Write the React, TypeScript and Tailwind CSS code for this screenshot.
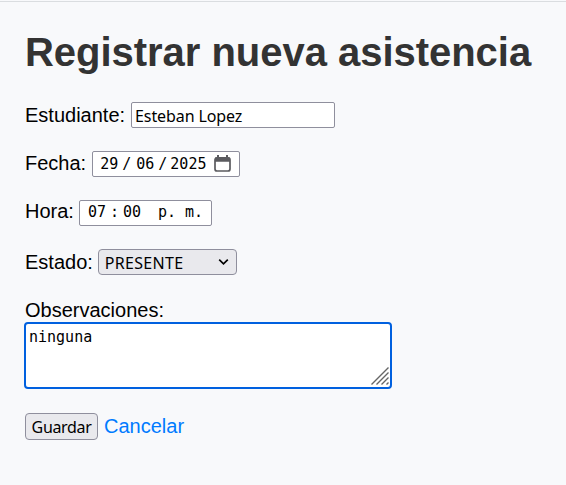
import React from "react";

const field =
  "box-border flex h-[26px] items-center rounded-[2px] border border-[#8f8f9d] bg-white font-['DejaVu_Sans_Mono',monospace] text-[15px] leading-none text-black";

function Row({
  label,
  labelClass = "mr-[6px] leading-[26px]",
  children,
}: {
  label: string;
  labelClass?: string;
  children: React.ReactNode;
}) {
  return (
    <div className="flex h-[26px] items-start">
      <label className={"whitespace-nowrap " + labelClass}>{label}</label>
      {children}
    </div>
  );
}

export default function App() {
  return (
    <main className="h-[485px] w-[566px] overflow-hidden border-t border-[#f8f9fb] bg-[#f8f9fb] font-['Liberation_Sans',Arial,sans-serif] text-[20px] text-black">
      <div className="h-px bg-[#dadde0]" />
      <form className="flex flex-col pl-[25px] pt-[27px]">
        <h1 className="h-[46px] whitespace-nowrap text-[40px] font-bold leading-[46px] tracking-[-0.03px] text-[#333333]">
          Registrar nueva asistencia
        </h1>
        <div className="mt-[27px] flex flex-col gap-[23px]">
          <Row label="Estudiante:">
            <input
              type="text"
              defaultValue="Esteban Lopez"
              className="box-border h-[26px] w-[204px] rounded-[2px] border border-[#8f8f9d] bg-white px-[3px] pt-px font-['Noto_Sans',sans-serif] text-[16px] leading-none tracking-[-0.1px] outline-none"
            />
          </Row>
          <Row label="Fecha:" labelClass="mr-[6px] leading-[25px]">
            <div className={field + " w-[148px] pl-[7px] pt-px"}>
              <span className="w-[22px]">29</span>
              <span className="w-[14px]">/</span>
              <span className="w-[22px]">06</span>
              <span className="w-[12px]">/</span>
              <span className="w-[44px] tracking-[0.1px]">2025</span>
              <svg width="17" height="17" viewBox="0 0 17 17" fill="none" className="mb-[2px]">
                <rect x="1" y="2.8" width="15" height="13.2" rx="2" stroke="#5b5b5f" strokeWidth="1.7" />
                <path d="M1 2.5h15v4.2H1zM3 0h2v4H3zM12 0h2v4h-2z" fill="#5b5b5f" />
              </svg>
            </div>
          </Row>
          <Row label="Hora:" labelClass="mr-[5px] leading-[23px]">
            <div className={field + " w-[133px] pb-px pl-[8px]"}>
              <span className="w-[22px]">07</span>
              <span className="w-[13px]">:</span>
              <span className="w-[35px]">00</span>
              <span className="whitespace-pre">p. m.</span>
            </div>
          </Row>
          <Row label="Estado:" labelClass="mr-[5px] leading-[26px]">
            <div className="flex h-[26px] w-[139px] items-center justify-between rounded-[4px] border border-[#8f8f9d] bg-[#e9e9ed] pl-[6px] pr-[7px] font-['Noto_Sans',sans-serif] text-[16px] leading-none tracking-[0.3px]">
              <span className="pt-px">PRESENTE</span>
              <svg width="11" height="8" viewBox="0 0 11 8" fill="none">
                <path d="M1.2 1.7l4.3 4.1 4.3-4.1" stroke="#000" strokeWidth="1.7" />
              </svg>
            </div>
          </Row>
        </div>
        <label className="mt-[23px] h-[24px] leading-[24px]">Observaciones:</label>
        <div className="relative -ml-px h-[67px] w-[368px]">
          <textarea
            defaultValue="ninguna"
            spellCheck={false}
            className="block h-[67px] w-[368px] resize-none rounded-[4px] border-2 border-[#0060df] bg-white px-[3px] py-[4px] font-['DejaVu_Sans_Mono',monospace] text-[15px] leading-[18px] outline-none"
          />
          <svg className="absolute bottom-[4px] right-[3px]" width="18" height="18" viewBox="0 0 18 18">
            <path d="M.5 17.5l17-17M5.5 17.5l12-12M10.5 17.5l7-7M15.5 17.5l2-2" stroke="#666" strokeWidth="1.4" />
          </svg>
        </div>
        <div className="mt-[24px] flex h-[27px] items-start gap-[6px]">
          <button
            type="button"
            className="h-[27px] w-[73px] rounded-[4px] border border-[#8f8f9d] bg-[#e9e9ed] pt-px font-['Noto_Sans',sans-serif] text-[16px] leading-none tracking-[-0.35px]"
          >
            Guardar
          </button>
          <a className="leading-[26px] text-[#007bff]">Cancelar</a>
        </div>
      </form>
    </main>
  );
}
